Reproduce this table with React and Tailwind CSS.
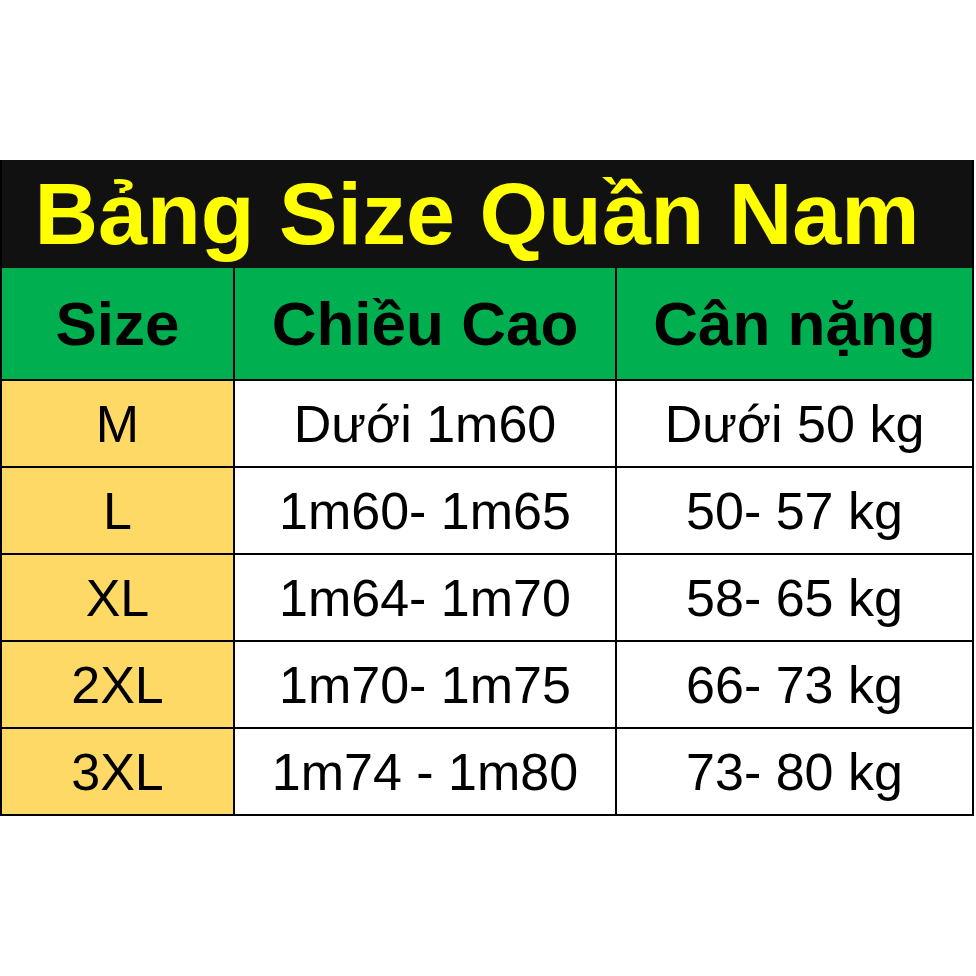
import React from 'react';

const rows = [
  { size: 'M', height: 'Dưới 1m60', weight: 'Dưới 50 kg' },
  { size: 'L', height: '1m60- 1m65', weight: '50- 57 kg' },
  { size: 'XL', height: '1m64- 1m70', weight: '58- 65 kg' },
  { size: '2XL', height: '1m70- 1m75', weight: '66- 73 kg' },
  { size: '3XL', height: '1m74 - 1m80', weight: '73- 80 kg' },
];

const SizeTable = () => {
  return (
    <div className="w-[976px] h-[976px] bg-white pt-[160px] font-['Liberation_Sans',Arial,sans-serif] text-black">
      <div className="w-[974px] border-x-2 border-black">
        <div className="h-[108px] bg-[#111111] flex items-center justify-center pr-[20px]">
          <span className="text-[88px] leading-none font-bold text-[#ffff00]">Bảng Size Quần Nam</span>
        </div>

        <div className="grid grid-cols-[233px_382px_1fr]">
          <div className="h-[113px] bg-[#00b050] border-r-2 border-b-2 border-black flex items-center justify-center">
            <span className="text-[62px] leading-none font-bold">Size</span>
          </div>
          <div className="h-[113px] bg-[#00b050] border-r-2 border-b-2 border-black flex items-center justify-center">
            <span className="text-[62px] leading-none font-bold">Chiều Cao</span>
          </div>
          <div className="h-[113px] bg-[#00b050] border-b-2 border-black flex items-center justify-center">
            <span className="text-[62px] leading-none font-bold">Cân nặng</span>
          </div>

          {rows.map((row) => (
            <React.Fragment key={row.size}>
              <div className="h-[87px] bg-[#ffd966] border-r-2 border-b-2 border-black flex items-center justify-center">
                <span className="text-[52px] leading-none">{row.size}</span>
              </div>
              <div className="h-[87px] bg-white border-r-2 border-b-2 border-black flex items-center justify-center">
                <span className="text-[52px] leading-none">{row.height}</span>
              </div>
              <div className="h-[87px] bg-white border-b-2 border-black flex items-center justify-center">
                <span className="text-[52px] leading-none">{row.weight}</span>
              </div>
            </React.Fragment>
          ))}
        </div>
      </div>
    </div>
  );
};

export default function App() {
  return <SizeTable />;
}
